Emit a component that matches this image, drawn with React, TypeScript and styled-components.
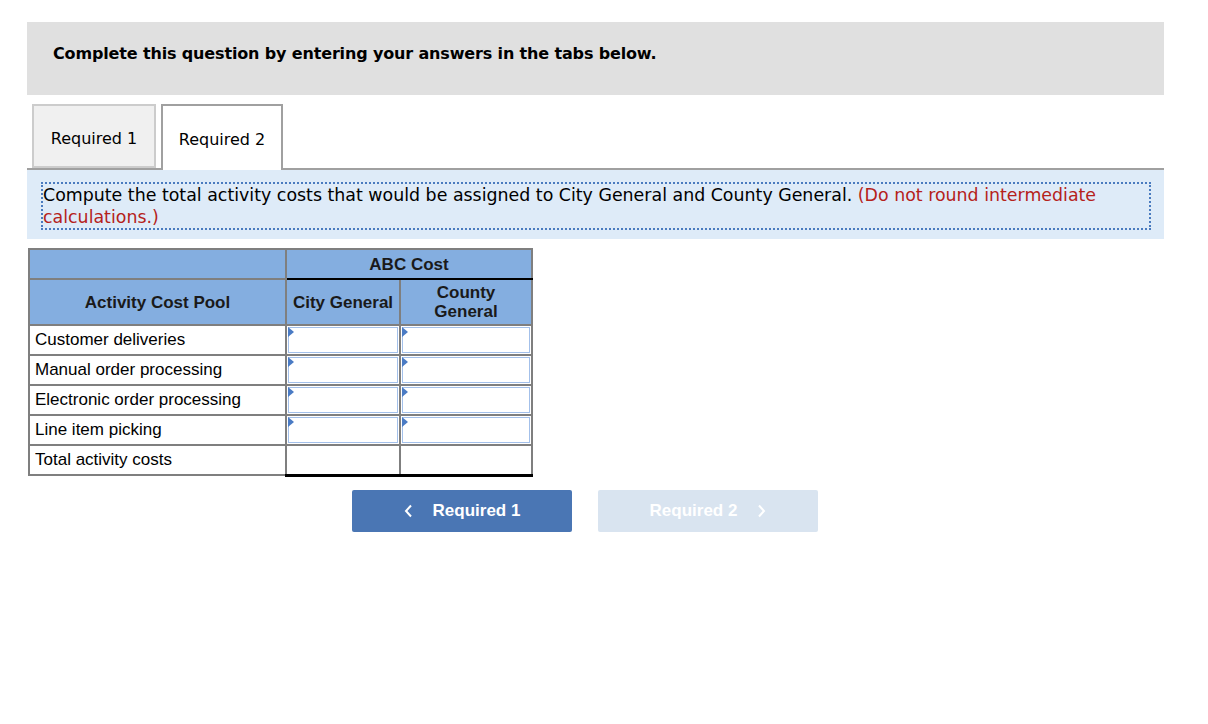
import React from "react";
import styled, { createGlobalStyle } from "styled-components";

const GlobalStyle = createGlobalStyle`
  body {
    margin: 0;
    background: #fff;
    font-family: "DejaVu Sans", Verdana, sans-serif;
    color: #000;
  }
`;

const Page = styled.div`
  padding: 22px 0 0 27px;
  width: 1137px;
`;

const Banner = styled.div`
  background: #e0e0e0;
  height: 73px;
  box-sizing: border-box;
  padding: 22px 0 0 26px;
  font-weight: bold;
  font-size: 16px;
  line-height: 20px;
  letter-spacing: -0.15px;
`;

const TabBar = styled.div`
  margin-top: 9px;
  display: flex;
  gap: 5px;
  padding-left: 5px;
  border-bottom: 2px solid #a0a0a0;
  height: 64px;
  align-items: flex-end;
`;

const Tab = styled.div<{ $active?: boolean }>`
  box-sizing: border-box;
  width: ${({ $active }) => ($active ? "122px" : "124px")};
  height: ${({ $active }) => ($active ? "66px" : "64px")};
  margin-bottom: ${({ $active }) => ($active ? "-2px" : "0")};
  background: ${({ $active }) => ($active ? "#fff" : "#f0f0f0")};
  border: 2px solid ${({ $active }) => ($active ? "#a0a0a0" : "#cccccc")};
  border-bottom: ${({ $active }) => ($active ? "none" : "2px solid #cccccc")};
  display: flex;
  align-items: center;
  justify-content: center;
  font-size: 16px;
  padding-top: ${({ $active }) => ($active ? "2px" : "4px")};
`;

const Instruction = styled.div`
  background: #deebf8;
  padding: 12px 13px 9px 14px;
`;

const InstructionText = styled.div`
  border: 2px dotted #4a7bbf;
  font-size: 17.4px;
  line-height: 22px;
  padding: 0;
`;

const Hint = styled.span`
  color: #b5221b;
`;

const Grid = styled.table`
  margin: 9px 0 0 1px;
  border-collapse: collapse;
  font-family: "Liberation Sans", Arial, sans-serif;
  font-size: 17px;
`;

const HeadCell = styled.th<{ $w?: number; $h?: number; $rule?: boolean }>`
  background: #84aee0;
  border: 2px solid #7f7f7f;
  ${({ $rule }) => ($rule ? "border-bottom: 2px solid #000;" : "")}
  width: ${({ $w }) => ($w ? `${$w}px` : "auto")};
  height: ${({ $h }) => ($h ? `${$h}px` : "auto")};
  padding: 0 2px;
  font-weight: bold;
  color: #1a1a1a;
  line-height: 19px;
  box-sizing: border-box;
`;

const LabelCell = styled.td`
  border: 2px solid #7f7f7f;
  height: 30px;
  padding: 0 5px;
  box-sizing: border-box;
  background: #fff;
`;

const InputCell = styled.td`
  border: 2px solid #7f7f7f;
  height: 30px;
  padding: 1px;
  box-sizing: border-box;
  background: #fff;
`;

const InputBox = styled.div`
  position: relative;
  height: 26px;
  box-sizing: border-box;
  border: 1px solid #a3c0ea;
  background: #fff;

  &::before {
    content: "";
    position: absolute;
    left: -1px;
    top: -1px;
    width: 0;
    height: 0;
    border-top: 5px solid transparent;
    border-bottom: 5px solid transparent;
    border-left: 6px solid #4a7bc4;
  }
`;

const TotalCell = styled.td`
  border: 2px solid #7f7f7f;
  border-top: 2px solid #000;
  border-bottom: 3px solid #000;
  height: 30px;
  box-sizing: border-box;
  background: #fff;
`;

const NavRow = styled.div`
  display: flex;
  gap: 26px;
  margin: 13px 0 0 325px;
`;

const NavButton = styled.button<{ $disabled?: boolean }>`
  width: 220px;
  height: 42px;
  border: none;
  border-radius: 2px;
  background: ${({ $disabled }) => ($disabled ? "#d9e4f0" : "#4a76b4")};
  color: #fff;
  font-family: "Liberation Sans", Arial, sans-serif;
  font-weight: bold;
  font-size: 17px;
  display: flex;
  align-items: center;
  justify-content: center;
  gap: 20px;
  cursor: pointer;
`;

const Chevron = ({ dir }: { dir: "left" | "right" }) => (
  <svg width="9" height="14" viewBox="0 0 9 14">
    <path
      d={dir === "left" ? "M7 1.5 L2 7 L7 12.5" : "M2 1.5 L7 7 L2 12.5"}
      fill="none"
      stroke="#fff"
      strokeWidth="2"
    />
  </svg>
);

const rows = [
  "Customer deliveries",
  "Manual order processing",
  "Electronic order processing",
  "Line item picking",
];

const App: React.FC = () => {
  return (
    <Page>
      <GlobalStyle />
      <Banner>Complete this question by entering your answers in the tabs below.</Banner>
      <TabBar>
        <Tab>Required 1</Tab>
        <Tab $active>Required 2</Tab>
      </TabBar>
      <Instruction>
        <InstructionText>
          Compute the total activity costs that would be assigned to City General and County
          General. <Hint>(Do not round intermediate calculations.)</Hint>
        </InstructionText>
      </Instruction>
      <Grid>
        <thead>
          <tr>
            <HeadCell $w={257} $h={30} />
            <HeadCell colSpan={2} $h={30} $rule>
              ABC Cost
            </HeadCell>
          </tr>
          <tr>
            <HeadCell $h={46}>Activity Cost Pool</HeadCell>
            <HeadCell $w={114} $h={46}>
              City General
            </HeadCell>
            <HeadCell $w={132} $h={46}>
              County
              <br />
              General
            </HeadCell>
          </tr>
        </thead>
        <tbody>
          {rows.map((label) => (
            <tr key={label}>
              <LabelCell>{label}</LabelCell>
              <InputCell>
                <InputBox />
              </InputCell>
              <InputCell>
                <InputBox />
              </InputCell>
            </tr>
          ))}
          <tr>
            <LabelCell>Total activity costs</LabelCell>
            <TotalCell />
            <TotalCell />
          </tr>
        </tbody>
      </Grid>
      <NavRow>
        <NavButton>
          <Chevron dir="left" />
          Required 1
        </NavButton>
        <NavButton $disabled>
          Required 2
          <Chevron dir="right" />
        </NavButton>
      </NavRow>
    </Page>
  );
};

export default App;
